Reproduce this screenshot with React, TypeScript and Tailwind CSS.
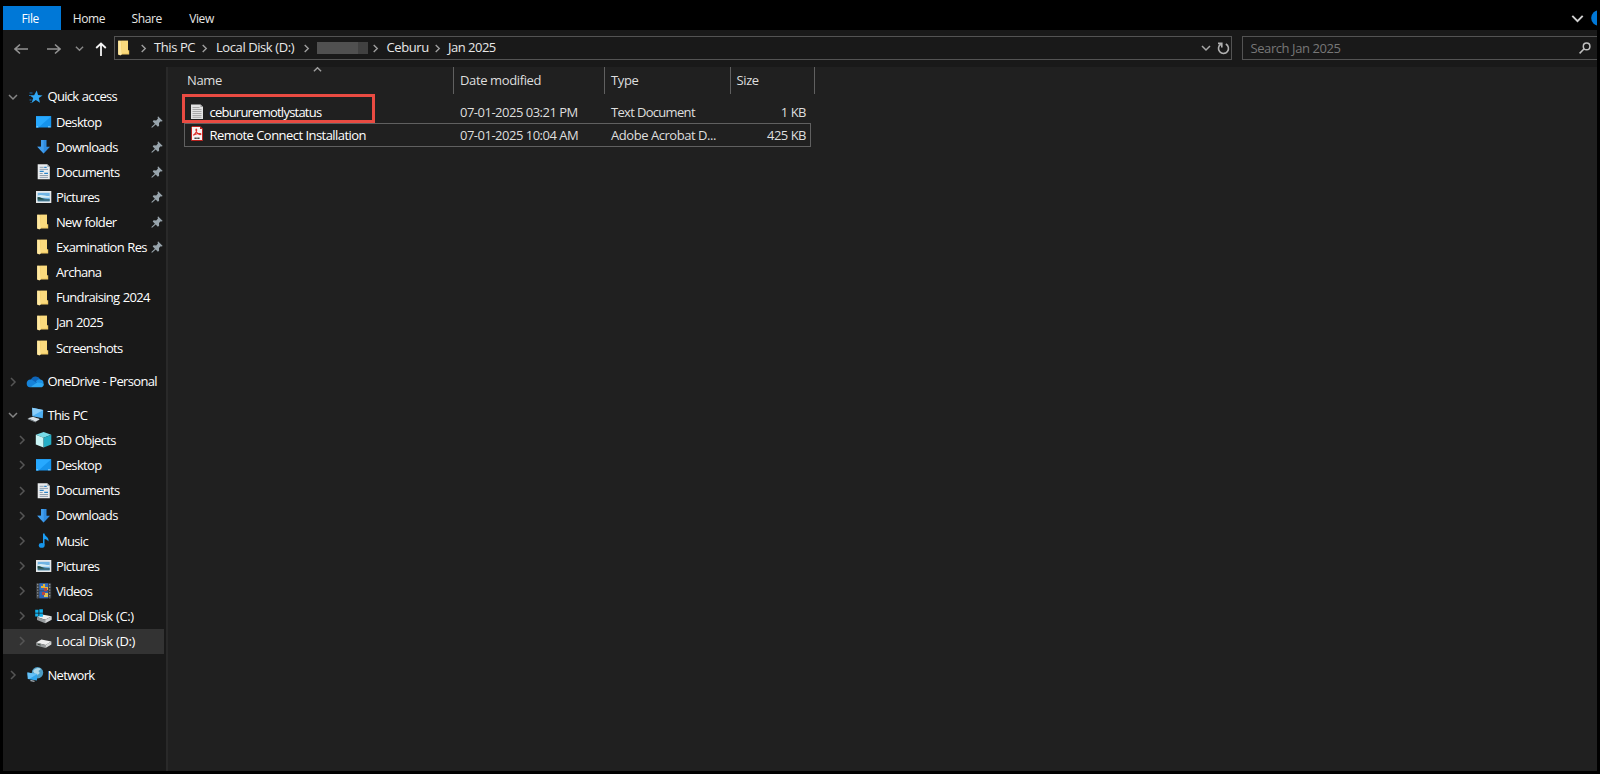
import type { ReactNode } from "react";
import clsx from "clsx";

type IconName =
  | "star"
  | "desktop"
  | "download"
  | "document"
  | "picture"
  | "folder"
  | "onedrive"
  | "pc"
  | "cube"
  | "music"
  | "video"
  | "diskC"
  | "disk"
  | "network";

const icons: Record<IconName, ReactNode> = {
  star: (
    <>
      <path d="M9.8 1.5 11 6l4.6.4-3.8 2.6 1.2 4.8L8.8 11l-4.2 2.9 1.6-4.8-3.5-2.8h4.4z" fill="#30a8f5" />
      <path d="M2.5 4h3M2 6.5h1.5M2.5 11h2M3.5 13.5h1" stroke="#1873b4" strokeWidth="1" />
    </>
  ),
  desktop: (
    <>
      <path d="M0 2.2h15.2v11.3H0z" fill="#1593ec" />
      <path d="M0 2.2h15.2L2.5 13.5H0z" fill="#27a9ff" />
      <path d="M.5 12.8h14" stroke="#8fd0fb" strokeWidth="1" strokeDasharray="1.5 10 3 1" />
    </>
  ),
  download: (
    <>
      <path d="M5 1h5.5v6.7H14l-6.3 6.8L1.3 7.7H5z" fill="#2f8be0" />
      <path d="M5 1h2.7v13.5L1.3 7.7H5z" fill="#429eed" />
    </>
  ),
  document: (
    <>
      <path d="M1.7.3h9.5L13.8 3v12.3H1.7z" fill="#e9ebed" />
      <path d="M11.2.3V3h2.6z" fill="#a9b0b5" />
      <path d="M3.7 3.3h4M3.7 5.4h8.3M3.7 9.5h3M3.7 11.5h8.3M3.7 13.4h8.3" stroke="#8496a7" strokeWidth=".9" />
      <path d="M8.2 3.3h2.5M3.7 7.3h4M8.2 9.3h3.8" stroke="#2b85ca" strokeWidth="1.3" />
    </>
  ),
  picture: (
    <>
      <path d="M0 2h15.3v12H0z" fill="#e6e8e9" />
      <path d="M1.7 3.8h12v8.5h-12z" fill="#71b5e4" />
      <path d="M1.7 6.5c4-1.6 7 .6 12 .5v1.8h-12z" fill="#d7edf5" />
      <path d="M1.7 8c3 0 4.5 2 12 2v2.3h-12z" fill="#3f7185" />
      <path d="M1.7 8.2c2.4-.2 4.5 1.1 6.5 2.4H1.7z" fill="#234c40" />
    </>
  ),
  folder: (
    <>
      <path d="M1.2.7H11v9.6h1.2v4.1h-11z" fill="#f1cb66" />
      <path d="M1.2.7h2.5l1.2 13.5-1.5 1.3-2.2-1.1z" fill="#ffe8a0" />
      <path d="M4.2.7H11v12.6H4.7z" fill="#fada7d" />
    </>
  ),
  onedrive: (
    <>
      <path d="M3.9 6A5 5 0 0 1 13.2 5.3l-5 5z" fill="#0f65b8" />
      <path d="M-.3 9.7C-.5 6.5 2.4 4.7 5.2 6L11 9.7l-8 3.5C1.1 13.3-.2 11.9-.3 9.7z" fill="#1683d9" />
      <path d="M8.8 8c1-2.2 3.1-3.2 4.6-2.4 2.4.2 3.2 2 3.1 3.4l-5.2 1z" fill="#1b91e6" />
      <path d="m3 13.3 7.2-4.7 6.4.6c.8 2.2-.8 4.2-2.8 4.1z" fill="#2da7f2" />
    </>
  ),
  pc: (
    <>
      <path d="m5.2.8 11 2.3-.4 8.2-10.3-2z" fill="#4eaff2" />
      <path d="m5.2.8 11 2.3-10.7 6z" fill="#8bcdf8" />
      <path d="m8 10.8 4.2.8-.4 1.7-4.8-1z" fill="#6c7881" />
      <path d="m.8 11.3 5.3-1.5 6.6 2.5-4 2.5z" fill="#d9e0e4" />
      <path d="m.8 11.3 7.9 3.5v.7L.8 12.3z" fill="#87939b" />
    </>
  ),
  cube: (
    <>
      <path d="M7.6 0l7.7 2.8-7.7 3-7.8-3z" fill="#77dae7" />
      <path d="m-.2 2.8 7.8 3v9.8l-7.8-3.1z" fill="#c9f4f5" />
      <path d="m15.3 2.8-7.7 3v9.8l7.7-3.1z" fill="#24adc5" />
    </>
  ),
  music: (
    <>
      <path d="M7 .5h1.5c.2 3.1 4.9 3.6 3.9 8-.8-1.6-2.3-2.3-3.9-2.5v6.3H7z" fill="#1a9df4" />
      <ellipse cx="5.7" cy="12.4" rx="2.9" ry="2.4" fill="#1795ea" />
    </>
  ),
  video: (
    <>
      <path d="M.2.3h15v15H.2z" fill="#3b3e42" />
      <path d="M3.3.3h8.8v7.2H3.3z" fill="#316ec0" />
      <path d="M3.3 8.2h8.8v7.1H3.3z" fill="#2f65b8" />
      <path d="M7 1h2v3h3v3H8V5H5V3h2z" fill="#e7b334" />
      <path d="M8 5h3v3H8zM6 9h3v3H6z" fill="#b84742" />
      <path d="M9 10h3v4H8v-2h1z" fill="#dec254" />
      <path d="M1.7.8v14.5M13.7.8v14.5" stroke="#8e9498" strokeWidth="1.3" strokeDasharray="1.4 1.4" />
    </>
  ),
  diskC: (
    <>
      <path d="m1 9 5-2.5 9.7 1.7-6.5 3.5z" fill="#eeeeee" />
      <path d="m1 9 8.2 2.7v3.5L1 12z" fill="#969b9d" />
      <path d="m9.2 11.7 6.5-3.5v3.5l-6.5 3.5z" fill="#d2d5d6" />
      <path d="M-.8 1.7H2.5v3H-.8zM3.3 1.3h3.6v3.4H3.3zM-.8 5.4h3.3v3H-.8zM3.3 5.4h3.6v3.4H3.3z" fill="#13b3f0" />
    </>
  ),
  disk: (
    <>
      <path d="m.2 9.5 5.2-3 10 2-5.9 3.5z" fill="#efefef" />
      <path d="m.2 9.5 9.3 2.5v3L.2 12.5z" fill="#969a9b" />
      <path d="m9.5 12 5.9-3.5v3L9.5 15z" fill="#d4d6d6" />
      <path d="m1.7 11.2 3 .8" stroke="#354339" strokeWidth="1" />
    </>
  ),
  network: (
    <>
      <circle cx="10.5" cy="5.7" r="5.7" fill="#4c9cc5" />
      <path d="M6 4c2-3 6-4 8-2l-2.6 2 1.4 2-3.2 3-2-2.3z" fill="#add7e8" />
      <path d="m.4 5.5 9.9 1.4-.4 6.7-9-1.7z" fill="#31a7ee" />
      <path d="m.4 5.5 9.9 1.4-8.2 5.2-1.2-.2z" fill="#66c1f6" />
      <path d="m4 13 3.5.8v1.3L2.8 14z" fill="#aab6be" />
    </>
  ),
};

function Icon({ name }: { name: IconName }) {
  return (
    <svg viewBox="0 0 16 16" className="size-4 shrink-0 overflow-visible">
      {icons[name]}
    </svg>
  );
}

function Chevron({ dir, className }: { dir: "right" | "down" | "up"; className: string }) {
  const paths = { right: "m3 1 4 4-4 4", down: "m1 3 4 4 4-4", up: "m1 7 4-4 4 4" };
  return (
    <svg viewBox="0 0 10 10" fill="none" stroke="currentColor" strokeWidth="1.5" className={clsx("shrink-0", className)}>
      <path d={paths[dir]} />
    </svg>
  );
}

function Pin() {
  return (
    <svg viewBox="0 0 12 12" className="size-3 shrink-0">
      <path d="m7 .3 4.7 4.7-1.2.6-.8-.3L8 7l.1 2.7-1.2 1-2.2-2.2-3.3 3.1-.9.1.1-.9 3.3-3.1-2.2-2.2.9-1.2 2.6.1L7 2.6l-.4-.9z" fill="#98a4ac" />
    </svg>
  );
}

type Item = { icon: IconName; label: string; pinned?: boolean; selected?: boolean };

const quickAccess: Item[] = [
  { icon: "desktop", label: "Desktop", pinned: true },
  { icon: "download", label: "Downloads", pinned: true },
  { icon: "document", label: "Documents", pinned: true },
  { icon: "picture", label: "Pictures", pinned: true },
  { icon: "folder", label: "New folder", pinned: true },
  { icon: "folder", label: "Examination Res", pinned: true },
  { icon: "folder", label: "Archana" },
  { icon: "folder", label: "Fundraising 2024" },
  { icon: "folder", label: "Jan 2025" },
  { icon: "folder", label: "Screenshots" },
];

const thisPc: Item[] = [
  { icon: "cube", label: "3D Objects" },
  { icon: "desktop", label: "Desktop" },
  { icon: "document", label: "Documents" },
  { icon: "download", label: "Downloads" },
  { icon: "music", label: "Music" },
  { icon: "picture", label: "Pictures" },
  { icon: "video", label: "Videos" },
  { icon: "diskC", label: "Local Disk (C:)" },
  { icon: "disk", label: "Local Disk (D:)", selected: true },
];

function RootRow({ icon, label, open }: { icon: IconName; label: string; open?: boolean }) {
  return (
    <div className="flex h-[25.12px] items-center pl-[5px]">
      <Chevron dir={open ? "down" : "right"} className={clsx("size-2.5", open ? "text-[#858585]" : "text-[#555555]")} />
      <span className="ml-[9px] flex w-5 shrink-0">
        <Icon name={icon} />
      </span>
      <span className="ml-[0.5px] pt-[1px] whitespace-nowrap">{label}</span>
    </div>
  );
}

function ChildRow({ item, expandable }: { item: Item; expandable?: boolean }) {
  return (
    <div className={clsx("flex h-[25.12px] items-center pl-[14px]", item.selected && "bg-[#333333]")}>
      <span className="flex w-[19px] shrink-0">
        {expandable && <Chevron dir="right" className="size-2.5 text-[#555555]" />}
      </span>
      <Icon name={item.icon} />
      <span
        className={clsx(
          "ml-1 w-[95px] shrink-0 pt-[1px] whitespace-nowrap",
          item.label.startsWith("Local Disk") && "tracking-[-0.45px]",
        )}
      >
        {item.label}
      </span>
      {item.pinned && <Pin />}
    </div>
  );
}

function Sidebar() {
  return (
    <nav className="flex w-[161px] shrink-0 flex-col gap-[8.6px] pt-[17.2px] text-[13px] tracking-[-0.68px] [word-spacing:0.6px] text-white">
      <div>
        <RootRow icon="star" label="Quick access" open />
        {quickAccess.map((item) => (
          <ChildRow key={item.label} item={item} />
        ))}
      </div>
      <RootRow icon="onedrive" label="OneDrive - Personal" />
      <div>
        <RootRow icon="pc" label="This PC" open />
        {thisPc.map((item) => (
          <ChildRow key={item.label} item={item} expandable />
        ))}
      </div>
      <RootRow icon="network" label="Network" />
    </nav>
  );
}

function Ribbon() {
  return (
    <div className="flex h-[30px] items-end bg-black pt-[6px] text-[12px] tracking-[-0.4px] text-[#e6e6e6]">
      <div className="flex h-6 w-[57.5px] items-center justify-center bg-[#0078d7] pt-[1px] pr-[3px] text-white">File</div>
      <div className="flex h-6 w-[57px] items-center justify-center pt-[1px]">Home</div>
      <div className="flex h-6 w-[58.5px] items-center justify-center pt-[1px]">Share</div>
      <div className="flex h-6 w-[51px] items-center justify-center pt-[1px]">View</div>
      <div className="ml-auto flex h-6 items-center gap-[7px]">
        <Chevron dir="down" className="size-[13px] text-[#d0d0d0]" />
        <svg viewBox="0 0 6 16" className="h-4 w-[6px]">
          <circle cx="8" cy="8" r="7.8" fill="#0078d7" />
        </svg>
      </div>
    </div>
  );
}

function AddressBar() {
  return (
    <div className="flex h-[37px] items-start pt-[6px] text-[13px] tracking-[-0.42px] text-[#e8e8e8]">
      <div className="flex h-6 w-[111px] shrink-0 items-center pt-[1px] pl-[11px]">
        <svg viewBox="0 0 14 12" fill="none" stroke="#929292" strokeWidth="1.6" className="h-3 w-[14px]">
          <path d="M14 6H1M6 1.5 1 6l5 4.5" />
        </svg>
        <svg viewBox="0 0 14 12" fill="none" stroke="#929292" strokeWidth="1.6" className="ml-[19px] h-3 w-[14px]">
          <path d="M0 6h13M8 1.5 13 6l-5 4.5" />
        </svg>
        <Chevron dir="down" className="ml-[13.5px] size-[9px] text-[#8a8a8a]" />
        <svg viewBox="0 0 12 14" fill="none" stroke="#f5f5f5" strokeWidth="1.8" className="ml-[11px] h-[14px] w-3">
          <path d="M6 14V1.5M1.2 6 6 1.5 10.8 6" />
        </svg>
      </div>
      <div className="flex h-6 w-[1118px] shrink-0 items-center border border-[#535353] pl-[2px]">
        <Icon name="folder" />
        <Chevron dir="right" className="ml-[5.5px] size-[9px] text-[#a0a0a0]" />
        <span className="ml-[6.5px] w-[46px] whitespace-nowrap">This PC</span>
        <Chevron dir="right" className="size-[9px] text-[#a0a0a0]" />
        <span className="ml-[7px] w-[86px] whitespace-nowrap">Local Disk (D:)</span>
        <Chevron dir="right" className="size-[9px] text-[#a0a0a0]" />
        <span className="ml-[6px] h-3 w-[41px] bg-[#505050]" />
        <span className="h-3 w-[10px] bg-[#414141]" />
        <Chevron dir="right" className="ml-[3px] size-[9px] text-[#a0a0a0]" />
        <span className="ml-[6.5px] w-[46px] whitespace-nowrap">Ceburu</span>
        <Chevron dir="right" className="size-[9px] text-[#a0a0a0]" />
        <span className="ml-[6.5px] tracking-[-0.5px] whitespace-nowrap">Jan 2025</span>
        <Chevron dir="down" className="mr-[6px] ml-auto size-[10px] text-[#a8a8a8]" />
        <svg viewBox="0 0 13 13" fill="none" stroke="#b0b0b0" strokeWidth="1.6" className="mr-px size-[13px]">
          <path d="M8.8 2a5 5 0 1 1-5 .2M1 1.4h3.8v4" />
        </svg>
      </div>
      <div className="ml-[10px] flex h-6 flex-1 items-center border border-r-0 border-[#535353] pr-[6px] pl-[7.5px] text-[#777777]">
        <span className="pt-[1px]">Search Jan 2025</span>
        <svg viewBox="0 0 12 12" fill="none" stroke="#c0c0c0" strokeWidth="1.5" className="ml-auto size-3">
          <circle cx="7.6" cy="4.4" r="3.3" />
          <path d="M5.2 6.8.6 11.4" />
        </svg>
      </div>
    </div>
  );
}

function TextFileIcon() {
  return (
    <svg viewBox="0 0 12 15" className="mb-[3px] h-[15px] w-3 shrink-0">
      <path d="M0 .5h9.5L12 3v12H0z" fill="#e3e3e3" />
      <path d="M9.5.5V3H12z" fill="#999999" />
      <path d="M1.5 3.5h7M1.5 5.5h9M1.5 7.5h9M1.5 9.5h9M1.5 11.5h9M1.5 13.3h9" stroke="#9b9b9b" strokeWidth=".8" />
    </svg>
  );
}

function PdfIcon() {
  return (
    <svg viewBox="0 0 12 15" className="mb-[4px] h-[15px] w-3 shrink-0">
      <path d="M1.2.5h7.8l2.5 2.5v11.5H.5V1.2z" fill="#f7f3f2" stroke="#b9211d" strokeWidth="1" />
      <path d="M9 .5V3h2.5z" fill="#b9211d" />
      <path d="M2.2 9.3c2-1 4-4.4 3.4-6-.8-.8-1 1.2.1 3 1.1 1.9 3.3 2.8 4.2 2 .3-1.3-4-1.1-6.9.6z" fill="none" stroke="#dd302b" strokeWidth="1.1" />
      <path d="M3.5 12.2h5" stroke="#333333" strokeWidth="1.6" strokeDasharray="1.4 .4" />
    </svg>
  );
}

const files = [
  {
    icon: <TextFileIcon />,
    name: "cebururemotlystatus",
    date: "07-01-2025 03:21 PM",
    type: "Text Document",
    size: "1 KB",
    rowClass: "h-[23px] border-transparent pt-[2px]",
    nameClass: "tracking-[-0.77px]",
    typeClass: "tracking-[-0.68px]",
  },
  {
    icon: <PdfIcon />,
    name: "Remote Connect Installation",
    date: "07-01-2025 10:04 AM",
    type: "Adobe Acrobat D...",
    size: "425 KB",
    rowClass: "h-6 border-[#606060] pt-[1px]",
    nameClass: "tracking-[-0.54px]",
    typeClass: "tracking-[-0.45px]",
  },
];

function FileList() {
  return (
    <main className="relative flex-1 border-l-2 border-[#292929] bg-[#202020] text-[13px] tracking-[-0.5px]">
      <div className="flex h-[27px] tracking-[-0.38px] text-[#dedede]">
        <div className="relative flex w-[286px] items-center border-r border-[#606060] pt-[1px] pl-[19px]">
          Name
          <Chevron dir="up" className="absolute -top-[2px] left-[145px] size-[9px] text-[#a0a0a0]" />
        </div>
        <div className="flex w-[151px] items-center border-r border-[#606060] pt-[1px] pl-[6px]">Date modified</div>
        <div className="flex w-[126px] items-center border-r border-[#606060] pt-[1px] pl-[6px]">Type</div>
        <div className="flex w-[84px] items-center border-r border-[#606060] pt-[1px] pl-[5.5px]">Size</div>
      </div>
      <div className="ml-4 w-[627px] pt-[6px]">
        {files.map((file) => (
          <div key={file.name} className={clsx("flex items-center border text-[#dedede]", file.rowClass)}>
            <div className="flex w-[275px] items-center pl-[6px] text-white">
              {file.icon}
              <span className={clsx("ml-[6.5px] whitespace-nowrap", file.nameClass)}>{file.name}</span>
            </div>
            <div className="w-[151px] whitespace-nowrap">{file.date}</div>
            <div className={clsx("w-[126px] whitespace-nowrap", file.typeClass)}>{file.type}</div>
            <div className="flex-1 pr-[4px] text-right whitespace-nowrap">{file.size}</div>
          </div>
        ))}
      </div>
      <div className="absolute top-[27px] left-[14px] h-[29px] w-[193px] border-[3px] border-[#ea4b42]" />
    </main>
  );
}

export default function App() {
  return (
    <div className="h-[774px] w-[1600px] overflow-hidden bg-black pr-[3px] pb-[3px] pl-[3px] font-['Open_Sans','Noto_Sans',sans-serif]">
      <div className="flex h-full flex-col bg-[#191919]">
        <Ribbon />
        <AddressBar />
        <div className="flex min-h-0 flex-1">
          <Sidebar />
          <div className="w-[2px] shrink-0" />
          <FileList />
        </div>
      </div>
    </div>
  );
}
